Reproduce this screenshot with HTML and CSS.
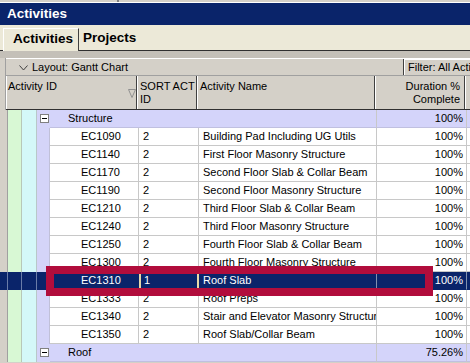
FILE: index.html
```html
<!DOCTYPE html>
<html>
<head>
<meta charset="utf-8">
<link rel="stylesheet" href="styles.css">
</head>
<body>
<div class="screen">
  <div class="topstrip"><span class="topsep"></span></div>
  <div class="titlebar">Activities</div>
  <div class="tabs">
    <div class="tab active">Activities</div>
    <div class="tab">Projects</div>
  </div>
  <div class="band"></div>
  <div class="main">
    <div class="frame"></div>
    <div class="content">
      <div class="layoutbar">
        <div class="layout"><svg class="chev" width="9" height="6" viewBox="0 0 9 6"><path d="M0.5 0.5 L4.5 5 L8.5 0.5" fill="none" stroke="#404040" stroke-width="1"/></svg>Layout: Gantt Chart</div>
        <div class="filter">Filter: All Activities</div>
      </div>
      <div class="colhead">
        <div class="hc h-id">Activity ID<svg class="tri" width="8" height="9" viewBox="0 0 8 9"><path d="M0.5 0.5 L7.5 0.5 L4 8.5 Z" fill="none" stroke="#909090" stroke-width="1"/></svg></div>
        <div class="hc h-sort"><span class="nw">SORT ACT</span><br>ID</div>
        <div class="hc h-name">Activity Name</div>
        <div class="hc h-dur">Duration %<br>Complete</div>
        <div class="hc h-x"></div>
      </div>
    </div>
  </div>
  <div class="body">
    <div class="row group">
      <div class="c f"></div><div class="c s1"></div><div class="c s2"></div>
      <div class="c s3"><span class="minus"></span></div>
      <div class="c gname">Structure</div>
      <div class="c dur">100%</div><div class="c x"></div>
    </div>
    <div class="row"><div class="c f"></div><div class="c s1"></div><div class="c s2"></div><div class="c s3"></div><div class="c id">EC1090</div><div class="c sort">2</div><div class="c name">Building Pad Including UG Utils</div><div class="c dur">100%</div><div class="c x"></div></div>
    <div class="row"><div class="c f"></div><div class="c s1"></div><div class="c s2"></div><div class="c s3"></div><div class="c id">EC1140</div><div class="c sort">2</div><div class="c name">First Floor Masonry Structure</div><div class="c dur">100%</div><div class="c x"></div></div>
    <div class="row"><div class="c f"></div><div class="c s1"></div><div class="c s2"></div><div class="c s3"></div><div class="c id">EC1170</div><div class="c sort">2</div><div class="c name">Second Floor Slab &amp; Collar Beam</div><div class="c dur">100%</div><div class="c x"></div></div>
    <div class="row"><div class="c f"></div><div class="c s1"></div><div class="c s2"></div><div class="c s3"></div><div class="c id">EC1190</div><div class="c sort">2</div><div class="c name">Second Floor Masonry Structure</div><div class="c dur">100%</div><div class="c x"></div></div>
    <div class="row"><div class="c f"></div><div class="c s1"></div><div class="c s2"></div><div class="c s3"></div><div class="c id">EC1210</div><div class="c sort">2</div><div class="c name">Third Floor Slab &amp; Collar Beam</div><div class="c dur">100%</div><div class="c x"></div></div>
    <div class="row"><div class="c f"></div><div class="c s1"></div><div class="c s2"></div><div class="c s3"></div><div class="c id">EC1240</div><div class="c sort">2</div><div class="c name">Third Floor Masonry Structure</div><div class="c dur">100%</div><div class="c x"></div></div>
    <div class="row"><div class="c f"></div><div class="c s1"></div><div class="c s2"></div><div class="c s3"></div><div class="c id">EC1250</div><div class="c sort">2</div><div class="c name">Fourth Floor Slab &amp; Collar Beam</div><div class="c dur">100%</div><div class="c x"></div></div>
    <div class="row"><div class="c f"></div><div class="c s1"></div><div class="c s2"></div><div class="c s3"></div><div class="c id">EC1300</div><div class="c sort">2</div><div class="c name">Fourth Floor Masonry Structure</div><div class="c dur">100%</div><div class="c x"></div></div>
    <div class="row sel"><div class="c f"></div><div class="c s1"></div><div class="c s2"></div><div class="c s3"></div><div class="c id">EC1310</div><div class="c sort edit">1</div><div class="c name">Roof Slab</div><div class="c dur">100%</div><div class="c x"></div></div>
    <div class="row"><div class="c f"></div><div class="c s1"></div><div class="c s2"></div><div class="c s3"></div><div class="c id">EC1333</div><div class="c sort">2</div><div class="c name">Roof Preps</div><div class="c dur">100%</div><div class="c x"></div></div>
    <div class="row"><div class="c f"></div><div class="c s1"></div><div class="c s2"></div><div class="c s3"></div><div class="c id">EC1340</div><div class="c sort">2</div><div class="c name">Stair and Elevator Masonry Structure</div><div class="c dur">100%</div><div class="c x"></div></div>
    <div class="row"><div class="c f"></div><div class="c s1"></div><div class="c s2"></div><div class="c s3"></div><div class="c id">EC1350</div><div class="c sort">2</div><div class="c name">Roof Slab/Collar Beam</div><div class="c dur">100%</div><div class="c x"></div></div>
    <div class="row group">
      <div class="c f"></div><div class="c s1"></div><div class="c s2"></div>
      <div class="c s3"><span class="minus"></span></div>
      <div class="c gname">Roof</div>
      <div class="c dur">75.26%</div><div class="c x"></div>
    </div>
  </div>
  <div class="highlight"></div>
</div>
</body>
</html>
```

FILE: styles.css
```css
* { box-sizing: border-box; }
html, body { margin: 0; padding: 0; }
body {
  font-family: "Liberation Sans", Arial, sans-serif;
  font-size: 11px;
  color: #000;
  background: #d4d0c8;
}
.screen {
  position: relative;
  width: 470px;
  height: 363px;
  overflow: hidden;
  background: #d4d0c8;
}
.topstrip {
  height: 3px;
  background: #d4d0c8;
  border-bottom: 1px solid #ffffff;
  display: flex;
}
.topsep { margin-left: 117px; width: 2px; background: #808080; }
.titlebar {
  height: 22px;
  background: #0a246a;
  color: #fff;
  font-weight: bold;
  font-size: 13.5px;
  line-height: 22px;
  padding-left: 7px;
}
.tabs {
  height: 25px;
  background: #ece9d8;
  display: flex;
  align-items: flex-end;
  padding-left: 3px;
}
.tab {
  font-weight: bold;
  font-size: 13.5px;
  height: 22px;
  line-height: 20px;
  padding: 0 4px;
}
.tab.active {
  padding: 0 5px 0 9px;
  border-top: 1px solid #fff;
  border-left: 1px solid #fff;
  border-right: 1px solid #404040;
  height: 23px;
  margin-bottom: -1px;
  background: #ece9d8;
  position: relative;
}
.band {
  height: 8px;
  background: #c4c0b8;
  border-top: 1px solid #303030;
}
.main {
  display: flex;
}
.frame {
  width: 8px;
  background: #d4d0c8;
  border-right: 1px solid #a0a0a0;
}
.content { flex: 1; }
.layoutbar {
  height: 17px;
  display: flex;
  background: #d4d0c8;
  border-top: 1px solid #fff;
}
.layout {
  flex: 1;
  display: flex;
  align-items: center;
  padding-left: 13px;
  color: #000;
}
.chev { margin-right: 4px; margin-top: 1px; }
.filter {
  width: 67px;
  white-space: nowrap;
  overflow: hidden;
  border-left: 1px solid #404040;
  box-shadow: inset 1px 1px 0 #fff;
  padding-left: 4px;
  line-height: 16px;
}
.colhead {
  height: 35px;
  display: grid;
  grid-template-columns: 131px 60px 178px 90px 1fr;
  background: #d4d0c8;
  border-top: 1px solid #a0a0a0;
  border-bottom: 1px solid #303030;
}
.hc {
  border-right: 1px solid #404040;
  box-shadow: inset 1px 0 0 #fff;
  padding: 4px 3px 0 2px;
  line-height: 13px;
  position: relative;
  overflow: hidden;
}
.h-id { padding-left: 2px; }
.h-sort { padding: 4px 0 0 3px; }
.nw { white-space: nowrap; }
.h-name { padding-left: 3px; }
.h-dur { text-align: right; padding-right: 4px; }
.h-x { border-right: none; }
.tri { position: absolute; left: 122px; top: 13px; }

.body { display: flex; flex-direction: column; }
.row {
  display: grid;
  grid-template-columns: 8px 14px 15px 13px 89px 60px 178px 90px 1fr;
  height: 18px;
  line-height: 17px;
  white-space: nowrap;
}
.c {
  overflow: hidden;
  background: #fff;
  border-bottom: 1px solid #c8c8c8;
  border-right: 1px solid #c8c8c8;
}
.c.f { background: #d4d0c8; border: none; border-right: 1px solid #a0a0a0; }
.c.s1 { background: #d8f8d4; border-bottom: none; border-right: 1px solid #b8c8b8; }
.c.s2 { background: #d4f8f8; border-bottom: none; border-right: 1px solid #b8c8c8; }
.c.s3 { background: #d4d4f8; border-bottom: none; border-right: 1px solid #c0c0d8; position: relative; }
.c.id { padding-left: 31px; }
.c.sort { padding-left: 4px; }
.c.name { padding-left: 4px; }
.c.dur { text-align: right; padding-right: 3px; }
.c.x { border-right: none; }

.group .c.gname,
.group .c.dur,
.group .c.x { background: #d4d4fa; border-bottom-color: #c0c0e0; }
.group .c.s3 { border-right: none; }
.group .c.gname { grid-column: span 3; padding-left: 18px; }
.minus {
  position: absolute;
  left: 3px;
  top: 4px;
  width: 9px;
  height: 9px;
  border: 1px solid #808080;
  background: #fff;
}
.minus::after {
  content: "";
  position: absolute;
  left: 1px;
  top: 3px;
  width: 5px;
  height: 1px;
  background: #000;
}

.sel .c { background: #0a246a; color: #fff; border-bottom-color: #0a246a; border-right-color: #0a246a; }
.sel .c.f, .sel .c.s1, .sel .c.s2, .sel .c.s3 { border-right-color: #6a7ca8; }
.sel .c.name { border-right-color: #8090b0; }
.sel .c.dur { border-right-color: #8090b0; }
.sel .c.edit {
  border: 2px solid #e8d8a8;
  border-top-width: 1px;
  padding-left: 3px;
  line-height: 15px;
}

.highlight {
  position: absolute;
  left: 46px;
  top: 266px;
  width: 387px;
  height: 30px;
  border: 8px solid #b10d3c;
}
```
